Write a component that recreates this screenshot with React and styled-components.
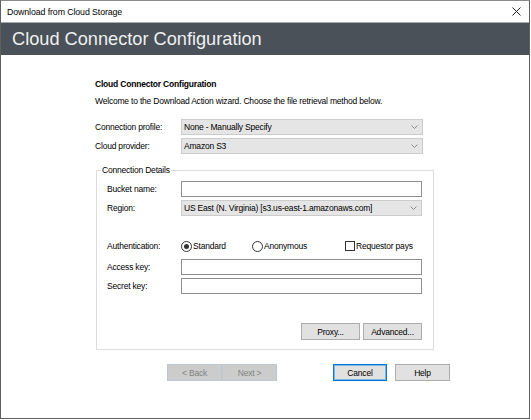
import React from 'react';
import styled, { createGlobalStyle } from 'styled-components';

const GlobalStyle = createGlobalStyle`
  html, body {
    margin: 0;
    padding: 0;
    background: #ffffff;
  }
  body {
    font-family: "Liberation Sans", Arial, sans-serif;
    font-size: 8.5px;
    letter-spacing: -0.2px;
    color: #000;
  }
`;

const Window = styled.div`
  width: 530px;
  height: 419px;
  box-sizing: border-box;
  border: 1px solid #5f5f5f;
  border-top-color: #8a8a8a;
  display: flex;
  flex-direction: column;
  background: #fff;
`;

const TitleBar = styled.div`
  height: 21px;
  display: flex;
  align-items: center;
  justify-content: space-between;
  padding: 0 8px 0 6px;
  font-size: 8.8px;
  letter-spacing: -0.1px;
`;

const Banner = styled.div`
  height: 32px;
  border-top: 1px solid #a8acb0;
  background: #4a5158;
  color: #eef0f2;
  font-size: 18.2px;
  letter-spacing: 0;
  display: flex;
  align-items: center;
  padding-left: 11px;
`;

const Body = styled.div`
  padding: 23px 0 0 94px;
  display: flex;
  flex-direction: column;
`;

const Heading = styled.div`
  font-weight: bold;
  line-height: 12px;
`;

const Intro = styled.div`
  line-height: 12px;
  margin-top: 5px;
`;

const Row = styled.div`
  display: flex;
  align-items: center;
  height: 16px;
  margin-top: ${p => p.$gap ?? 3}px;
`;

const Label = styled.div`
  width: ${p => p.$w}px;
  flex: none;
`;

const SelectBox = styled.div`
  width: 242px;
  height: 16px;
  box-sizing: border-box;
  border: 1px solid #cccccc;
  background: #e5e5e5;
  display: flex;
  align-items: center;
  justify-content: space-between;
  padding: 0 4px 0 2px;
`;

const TextBox = styled.div`
  width: 242px;
  height: 16px;
  box-sizing: border-box;
  border: 1px solid #8e8e8e;
  background: #fff;
`;

const Group = styled.fieldset`
  margin: 10px 0 0 1px;
  width: 338px;
  box-sizing: border-box;
  border: 1px solid #dcdcdc;
  padding: 5px 11px 9px 10px;
  min-width: 0;
`;

const Legend = styled.legend`
  padding: 0 1px;
  margin-left: -6px;
  line-height: 12px;
`;

const Options = styled.div`
  display: flex;
  align-items: center;
`;

const Option = styled.div`
  width: ${p => p.$w}px;
  display: flex;
  align-items: center;
  gap: 1px;
`;

const Radio = styled.span`
  width: 11px;
  height: 11px;
  box-sizing: border-box;
  border: 1px solid #333;
  border-radius: 50%;
  display: flex;
  align-items: center;
  justify-content: center;
  flex: none;
  &::after {
    content: '';
    display: ${p => (p.$on ? 'block' : 'none')};
    width: 5px;
    height: 5px;
    border-radius: 50%;
    background: #333;
  }
`;

const Check = styled.span`
  width: 10px;
  height: 10px;
  box-sizing: border-box;
  border: 1px solid #333;
  flex: none;
`;

const ButtonRow = styled.div`
  display: flex;
  justify-content: flex-end;
  gap: 3px;
  margin-top: ${p => p.$gap}px;
`;

const Button = styled.div`
  width: ${p => p.$w}px;
  height: 17px;
  box-sizing: border-box;
  border: 1px solid ${p => (p.$focus ? '#0078d7' : p.$off ? '#bfc7cf' : '#adadad')};
  box-shadow: ${p => (p.$focus ? 'inset 0 0 0 1px #7fb6e6' : 'none')};
  background: ${p => (p.$off ? '#cccccc' : '#e1e1e1')};
  color: ${p => (p.$off ? '#838383' : '#000')};
  display: flex;
  align-items: center;
  justify-content: center;
  margin-left: ${p => p.$ml || 0}px;
`;

const Footer = styled.div`
  display: flex;
  margin: 14px 0 0 72px;
`;

const Chevron = () => (
  <svg width="7" height="4" viewBox="0 0 7 4">
    <path d="M0.5 0.5 L3.5 3.5 L6.5 0.5" fill="none" stroke="#8a8a8a" strokeWidth="1" />
  </svg>
);

const CloseIcon = () => (
  <svg width="9" height="9" viewBox="0 0 9 9">
    <path d="M0.5 0.5 L8.5 8.5 M8.5 0.5 L0.5 8.5" stroke="#222" strokeWidth="1" />
  </svg>
);

const Select = ({ value }) => (
  <SelectBox>
    <span>{value}</span>
    <Chevron />
  </SelectBox>
);

export default function App() {
  return (
    <>
      <GlobalStyle />
      <Window>
        <TitleBar>
          <span>Download from Cloud Storage</span>
          <CloseIcon />
        </TitleBar>
        <Banner>Cloud Connector Configuration</Banner>
        <Body>
          <Heading>Cloud Connector Configuration</Heading>
          <Intro>Welcome to the Download Action wizard. Choose the file retrieval method below.</Intro>
          <Row $gap={12}>
            <Label $w={86}>Connection profile:</Label>
            <Select value="None - Manually Specify" />
          </Row>
          <Row>
            <Label $w={86}>Cloud provider:</Label>
            <Select value="Amazon S3" />
          </Row>
          <Group>
            <Legend>Connection Details</Legend>
            <Row $gap={0}>
              <Label $w={74}>Bucket name:</Label>
              <TextBox />
            </Row>
            <Row>
              <Label $w={74}>Region:</Label>
              <Select value="US East (N. Virginia) [s3.us-east-1.amazonaws.com]" />
            </Row>
            <Row $gap={22}>
              <Label $w={74}>Authentication:</Label>
              <Options>
                <Option $w={71}><Radio $on />Standard</Option>
                <Option $w={93}><Radio />Anonymous</Option>
                <Option $w={78}><Check />Requestor pays</Option>
              </Options>
            </Row>
            <Row $gap={5}>
              <Label $w={74}>Access key:</Label>
              <TextBox />
            </Row>
            <Row>
              <Label $w={74}>Secret key:</Label>
              <TextBox />
            </Row>
            <ButtonRow $gap={29}>
              <Button $w={59}>Proxy...</Button>
              <Button $w={59}>Advanced...</Button>
            </ButtonRow>
          </Group>
          <Footer>
            <Button $w={55} $off>&lt; Back</Button>
            <Button $w={55} $off>Next &gt;</Button>
            <Button $w={54} $focus $ml={56}>Cancel</Button>
            <Button $w={55} $ml={8}>Help</Button>
          </Footer>
        </Body>
      </Window>
    </>
  );
}
